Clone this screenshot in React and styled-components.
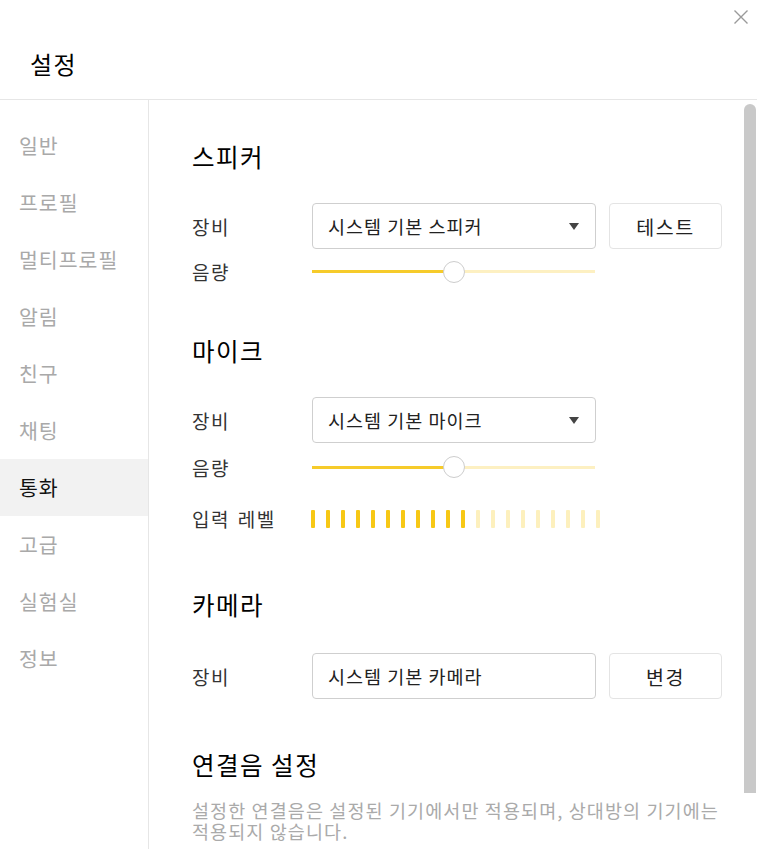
import React from "react";
import styled, { createGlobalStyle } from "styled-components";

const GlobalStyle = createGlobalStyle`
  html, body { margin: 0; padding: 0; background: #fff; }
  body { font-family: "Noto Sans CJK KR", "Noto Sans", sans-serif; color: #111; }
  * { box-sizing: border-box; }
`;

const Window = styled.div`
  position: relative;
  width: 757px;
  height: 849px;
  overflow: hidden;
  background: #fff;
  display: flex;
  flex-direction: column;
`;

const Header = styled.header`
  height: 100px;
  flex: none;
  border-bottom: 1px solid #e6e6e6;
  display: flex;
  align-items: flex-end;
  padding: 0 0 19px 30px;
`;

const Title = styled.h1`
  margin: 0;
  font-size: 24px;
  font-weight: 400;
  letter-spacing: 1.5px;
  line-height: 32px;
  color: #000;
`;

const CloseButton = styled.button`
  position: absolute;
  top: 9px;
  right: 8px;
  width: 16px;
  height: 16px;
  padding: 0;
  border: none;
  background: none;
  display: flex;
`;

const Body = styled.div`
  flex: 1;
  display: flex;
  min-height: 0;
`;

const Sidebar = styled.nav`
  width: 149px;
  flex: none;
  border-right: 1px solid #e6e6e6;
  padding-top: 17px;
  display: flex;
  flex-direction: column;
`;

const NavItem = styled.div`
  height: 57px;
  display: flex;
  align-items: center;
  padding: 0 0 2px 19px;
  font-size: 20.5px;
  letter-spacing: 1px;
  color: ${(p) => (p.$active ? "#111" : "#a9a9a9")};
  background: ${(p) => (p.$active ? "#f2f2f2" : "transparent")};
`;

const Content = styled.main`
  position: relative;
  flex: 1;
  overflow: hidden;
  padding: 41px 0 0 43px;
`;

const Section = styled.section`
  margin-bottom: ${(p) => p.$gap}px;
`;

const Heading = styled.h2`
  margin: 0;
  font-size: 24.5px;
  font-weight: 400;
  letter-spacing: 1.5px;
  line-height: 32px;
  height: 32px;
  color: #000;
`;

const Rows = styled.div`
  margin-top: ${(p) => p.$top}px;
  display: flex;
  flex-direction: column;
`;

const Row = styled.div`
  display: flex;
  align-items: center;
  height: ${(p) => p.$h}px;
  padding-top: ${(p) => p.$pt || 0}px;
`;

const Label = styled.div`
  width: 120px;
  flex: none;
  font-size: 19px;
  letter-spacing: 1.5px;
  word-spacing: 2px;
  color: #333;
`;

const Field = styled.div`
  width: 284px;
  height: 46px;
  flex: none;
  border: 1px solid #cfcfcf;
  border-radius: 4px;
  display: flex;
  align-items: center;
  justify-content: space-between;
  padding: 0 16px 0 15px;
  font-size: 18.5px;
  letter-spacing: 1px;
  color: #222;
`;

const Caret = styled.span`
  width: 0;
  height: 0;
  border-left: 5.5px solid transparent;
  border-right: 5.5px solid transparent;
  border-top: 7px solid #444;
`;

const Button = styled.button`
  margin-left: 13px;
  width: 113px;
  height: 46px;
  border: 1px solid #e4e4e4;
  border-radius: 4px;
  background: #fff;
  font-family: inherit;
  font-size: 19.5px;
  letter-spacing: 1.5px;
  color: #222;
  padding: 0;
`;

const Slider = styled.div`
  position: relative;
  width: 283px;
  height: 3px;
  background: #fdf0c2;
`;

const SliderFill = styled.div`
  height: 100%;
  background: #f6cb2a;
`;

const Thumb = styled.div`
  position: absolute;
  top: 50%;
  width: 22px;
  height: 22px;
  margin: -11px 0 0 -11px;
  border-radius: 50%;
  background: #fff;
  border: 1px solid #cdcdcd;
`;

const Levels = styled.div`
  display: flex;
  gap: 11px;
  margin-left: -1px;
`;

const LevelBar = styled.span`
  width: 4px;
  height: 18px;
  border-radius: 1px;
  background: ${(p) => (p.$on ? "#f7c815" : "#fdf0bd")};
`;

const Description = styled.p`
  margin: 19px 0 0;
  width: 535px;
  font-size: 18.5px;
  letter-spacing: 1.1px;
  line-height: 21px;
  word-break: keep-all;
  color: #aaa;
`;

const ScrollThumb = styled.div`
  position: absolute;
  top: 4px;
  right: 1px;
  width: 12px;
  height: 689px;
  border-radius: 6px 6px 0 0;
  background: #c9c9c9;
`;

const navItems = ["일반", "프로필", "멀티프로필", "알림", "친구", "채팅", "통화", "고급", "실험실", "정보"];

function VolumeSlider({ value }) {
  return (
    <Slider>
      <SliderFill style={{ width: `${value}%` }} />
      <Thumb style={{ left: `${value}%` }} />
    </Slider>
  );
}

export default function App() {
  return (
    <>
      <GlobalStyle />
      <Window>
        <Header>
          <Title>설정</Title>
        </Header>
        <CloseButton aria-label="닫기">
          <svg width="16" height="16" viewBox="0 0 16 16">
            <path d="M1.5 1.5 L14.5 14.5 M14.5 1.5 L1.5 14.5" stroke="#9a9a9a" strokeWidth="1.4" fill="none" />
          </svg>
        </CloseButton>
        <Body>
          <Sidebar>
            {navItems.map((n) => (
              <NavItem key={n} $active={n === "통화"}>
                {n}
              </NavItem>
            ))}
          </Sidebar>
          <Content>
            <Section $gap={41}>
              <Heading>스피커</Heading>
              <Rows $top={30}>
                <Row $h={46}>
                  <Label>장비</Label>
                  <Field>
                    시스템 기본 스피커
                    <Caret />
                  </Field>
                  <Button>테스트</Button>
                </Row>
                <Row $h={45}>
                  <Label>음량</Label>
                  <VolumeSlider value={50} />
                </Row>
              </Rows>
            </Section>
            <Section $gap={47}>
              <Heading>마이크</Heading>
              <Rows $top={30}>
                <Row $h={46}>
                  <Label>장비</Label>
                  <Field>
                    시스템 기본 마이크
                    <Caret />
                  </Field>
                </Row>
                <Row $h={48}>
                  <Label>음량</Label>
                  <VolumeSlider value={50} />
                </Row>
                <Row $h={51} $pt={4}>
                  <Label>입력 레벨</Label>
                  <Levels>
                    {Array.from({ length: 20 }, (_, i) => (
                      <LevelBar key={i} $on={i < 11} />
                    ))}
                  </Levels>
                </Row>
              </Rows>
            </Section>
            <Section $gap={50}>
              <Heading>카메라</Heading>
              <Rows $top={32}>
                <Row $h={46}>
                  <Label>장비</Label>
                  <Field>시스템 기본 카메라</Field>
                  <Button>변경</Button>
                </Row>
              </Rows>
            </Section>
            <Section $gap={0}>
              <Heading>연결음 설정</Heading>
              <Description>
                설정한 연결음은 설정된 기기에서만 적용되며, 상대방의 기기에는 적용되지 않습니다.
              </Description>
            </Section>
            <ScrollThumb />
          </Content>
        </Body>
      </Window>
    </>
  );
}
